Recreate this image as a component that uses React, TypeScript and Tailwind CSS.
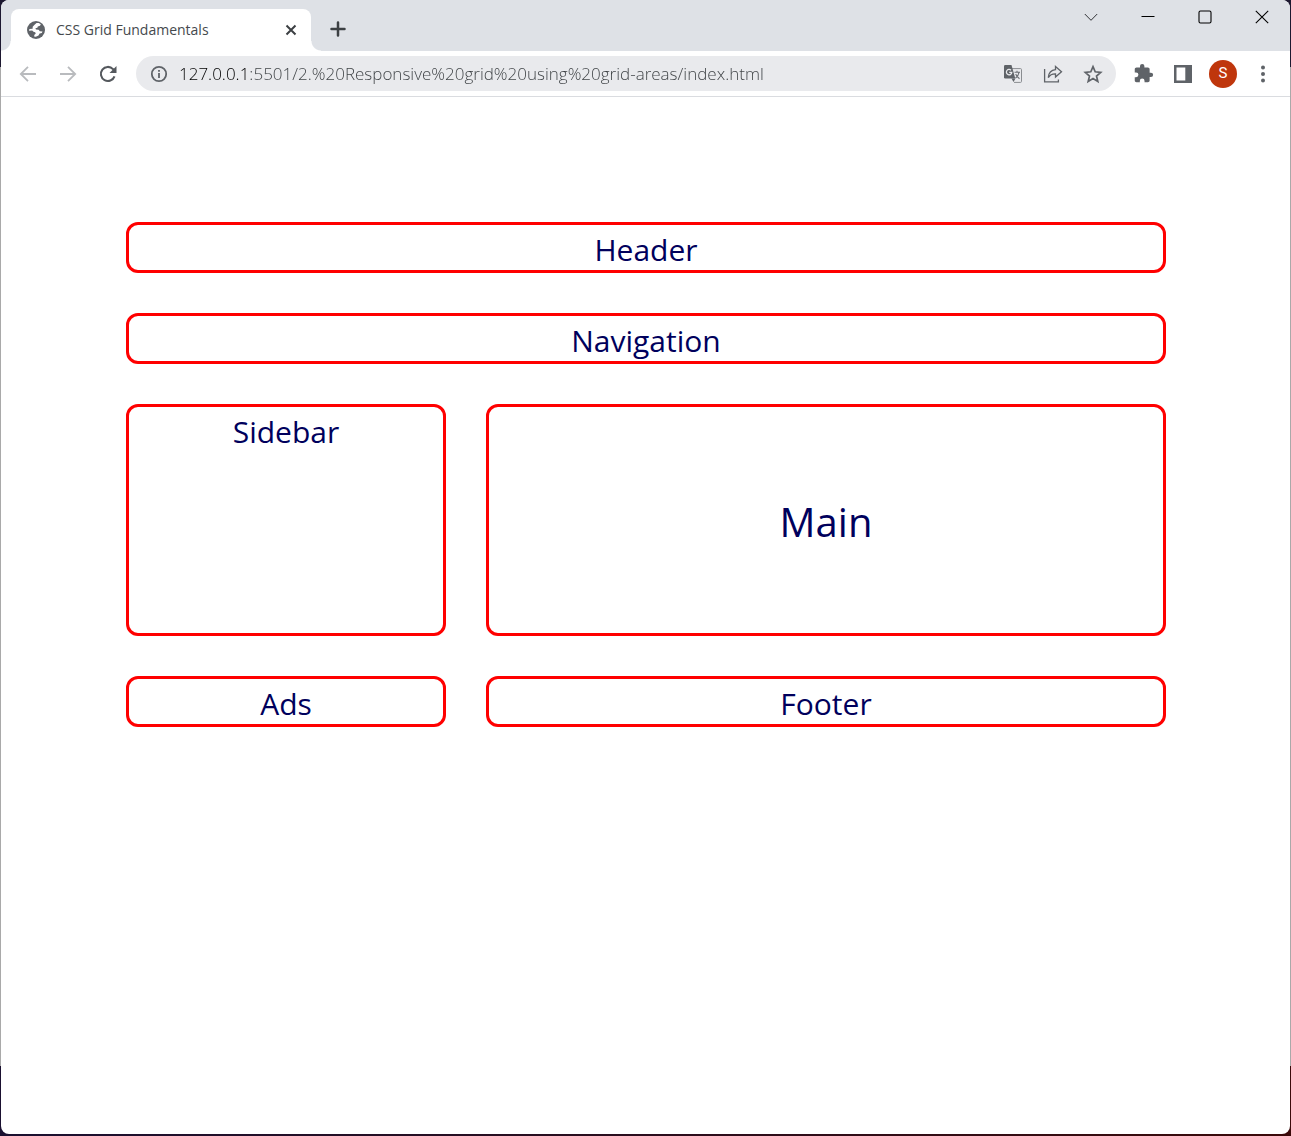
import { useState } from "react";
import type { ReactNode } from "react";

const PAGE_URL = "127.0.0.1:5501/2.%20Responsive%20grid%20using%20grid-areas/index.html";

function IconButton({ label, className = "", children }: { label: string; className?: string; children: ReactNode }) {
  return (
    <button type="button" aria-label={label} className={`flex shrink-0 items-center justify-center ${className}`}>
      {children}
    </button>
  );
}

function TabStrip() {
  return (
    <div className="flex h-[51px] items-end justify-between bg-[#dee1e6]">
      <div className="flex min-w-0 items-end">
        <div className="h-[10px] w-[10px] bg-[radial-gradient(circle_at_0_0,#dee1e6_9px,#ffffff_10px)]" />
        <div className="flex h-[42px] w-[300px] items-center rounded-t-lg bg-white pr-3 pl-4">
          <svg className="h-[18px] w-[18px] shrink-0" viewBox="0 0 18 18" aria-hidden="true">
            <circle cx="9" cy="9" r="9" fill="#5f6368" />
            <path
              d="M9.500 2h2.300l2 1.200-.8 1.600-2.200.6-.4 1.300-2 .5.600 1.300 2.600.2 1.200 1.500 2.700.2-.7 1.600-2.200.6-1.100 1.800-2.700 1.400-1.700-.4.300-1.700 1.300-.9-.5-1.500-1.700-.6-1.300-1.300-3.200.3.400-1.700 3.200-.2.100-2 1.600-1.700z"
              fill="#ffffff"
            />
          </svg>
          <span className="ml-[11px] grow truncate text-[14px] leading-5 text-[#45494d]">CSS Grid Fundamentals</span>
          <IconButton label="Close tab" className="h-4 w-4">
            <svg className="h-4 w-4" viewBox="0 0 16 16" fill="none" stroke="#3c4043" strokeWidth="2">
              <path d="M3.500 3.500l9 9M12.500 3.500l-9 9" />
            </svg>
          </IconButton>
        </div>
        <div className="h-[10px] w-[10px] bg-[radial-gradient(circle_at_100%_0,#dee1e6_9px,#ffffff_10px)]" />
        <IconButton label="New tab" className="mb-2 h-7 w-[34px]">
          <svg className="h-4 w-4" viewBox="0 0 16 16" fill="none" stroke="#3c4043" strokeWidth="2.500" strokeLinecap="round">
            <path d="M8 1.500v13M1.500 8h13" />
          </svg>
        </IconButton>
      </div>
      <div className="flex self-start">
        <IconButton label="Search tabs" className="h-[34px] w-[57px]">
          <svg className="h-[14px] w-[14px]" viewBox="0 0 14 14" fill="none" stroke="#303236">
            <path d="M.8 4L7 10.300 13.200 4" />
          </svg>
        </IconButton>
        <IconButton label="Minimize" className="h-[34px] w-[57px]">
          <svg className="h-[14px] w-[14px]" viewBox="0 0 14 14" fill="none" stroke="#000000">
            <path d="M.5 6.500h13" />
          </svg>
        </IconButton>
        <IconButton label="Maximize" className="h-[34px] w-[57px]">
          <svg className="h-[14px] w-[14px]" viewBox="0 0 14 14" fill="none" stroke="#000000" strokeWidth="1.100">
            <rect x="1" y="1" width="12" height="12" rx="1.500" />
          </svg>
        </IconButton>
        <IconButton label="Close window" className="h-[34px] w-[57px]">
          <svg className="h-[14px] w-[14px]" viewBox="0 0 14 14" fill="none" stroke="#000000" strokeWidth="1.100">
            <path d="M.8.8l12.400 12.400M13.200.8L.8 13.200" />
          </svg>
        </IconButton>
      </div>
    </div>
  );
}

function AddressBar() {
  const [url, setUrl] = useState(PAGE_URL);
  return (
    <div className="flex h-[35px] min-w-0 grow items-center rounded-full bg-[#e9eaed] pl-[14px]">
      <IconButton label="Site information" className="h-[18px] w-[18px]">
        <svg className="h-[18px] w-[18px]" viewBox="0 0 18 18" fill="none" stroke="#5f6368" strokeWidth="1.800">
          <circle cx="9" cy="9" r="7.200" />
          <path d="M9 8v5M9 5v1.800" />
        </svg>
      </IconButton>
      <input
        type="text"
        aria-label="Address"
        value={url}
        onChange={(event) => setUrl(event.target.value)}
        className="ml-[11px] h-8 min-w-0 grow bg-[linear-gradient(to_right,#000000_67px,#3c4043_67px)] bg-clip-text text-[17px] font-light text-transparent caret-black outline-none"
      />
      <IconButton label="Translate this page" className="h-8 w-10">
        <svg className="h-5 w-5" viewBox="0 0 20 20" fill="none">
          <path d="M8.500 4.600h9q1 0 1 1v11.800q0 1-1 1H11" stroke="#8a8d91" strokeWidth="1" />
          <path d="M2.200 1h6.300l3.800 13.500H2.200Q1 14.500 1 13.300V2.200Q1 1 2.200 1z" fill="#5f6368" />
          <path d="M8.500 14.500h4L10.500 18z" fill="#5f6368" />
          <path d="M8 6.200A2.700 2.700 0 1 0 8.800 8.300H6.200" stroke="#e9eaed" strokeWidth="1.300" />
          <path d="M11.500 8.200h5.500M14 6.800v1.400M16 8.300c-.4 2.500-2 4.500-3.500 5.700M12.700 10c.8 1.900 2.200 3.600 3.800 4.700" stroke="#6b6f74" strokeWidth="1.100" />
        </svg>
      </IconButton>
      <IconButton label="Share this page" className="h-8 w-10">
        <svg className="h-5 w-5" viewBox="0 0 20 20" fill="none" stroke="#5f6368" strokeWidth="1.300">
          <path d="M1.600 5v12.800h13.800v-2.300" />
          <path d="M12.500 2.500l6 5.200-6 5.300v-3.100c-3.400-.1-5.700 1.200-7.200 3.700.3-4.200 2.700-7.400 7.200-7.900z" strokeLinejoin="miter" />
        </svg>
      </IconButton>
      <IconButton label="Bookmark this tab" className="mr-[3px] h-8 w-10">
        <svg className="h-5 w-5" viewBox="0 0 20 20" fill="none" stroke="#5f6368" strokeWidth="1.700">
          <path d="M10 2.700l2.200 5.100 5.500.5-4.200 3.700 1.300 5.400-4.800-2.900-4.800 2.900 1.300-5.400-4.200-3.700 5.500-.5z" />
        </svg>
      </IconButton>
    </div>
  );
}

function Toolbar() {
  return (
    <div className="flex h-[46px] items-center border-b border-[#dadce0] bg-white pl-[7px]">
      <IconButton label="Back" className="h-8 w-10">
        <svg className="h-[18px] w-[18px]" viewBox="0 0 18 18" fill="none" stroke="#b9bbbe" strokeWidth="1.800">
          <path d="M17 9H2M9 1.800L1.800 9 9 16.200" />
        </svg>
      </IconButton>
      <IconButton label="Forward" className="h-8 w-10">
        <svg className="h-[18px] w-[18px]" viewBox="0 0 18 18" fill="none" stroke="#b9bbbe" strokeWidth="1.800">
          <path d="M1 9h15M9 1.800L16.200 9 9 16.200" />
        </svg>
      </IconButton>
      <IconButton label="Reload" className="h-8 w-10">
        <svg className="h-[18px] w-[18px]" viewBox="0 0 18 18" fill="none">
          <path d="M15.500 11.300A7 7 0 1 1 14 4.100L15.300 5.400" stroke="#55595e" strokeWidth="2.100" />
          <path d="M17.500 1v7h-7z" fill="#55595e" />
        </svg>
      </IconButton>
      <div className="ml-2 flex min-w-0 grow">
        <AddressBar />
      </div>
      <div className="flex shrink-0 items-center px-[7px]">
        <IconButton label="Extensions" className="h-8 w-10">
          <svg className="h-[21px] w-[21px]" viewBox="0 0 24 24" fill="#5f6368">
            <path d="M20.500 11H19V7c0-1.100-.9-2-2-2h-4V3.500a2.500 2.500 0 0 0-5 0V5H4c-1.100 0-2 .9-2 2v3.800h1.500a2.700 2.700 0 0 1 0 5.400H2V20c0 1.100.9 2 2 2h3.800v-1.500a2.700 2.700 0 0 1 5.400 0V22H17c1.100 0 2-.9 2-2v-4h1.500a2.500 2.500 0 0 0 0-5z" />
          </svg>
        </IconButton>
        <IconButton label="Side panel" className="h-8 w-10">
          <svg className="h-[18px] w-[18px]" viewBox="0 0 18 18">
            <path fillRule="evenodd" d="M0 0h18v18H0zM2.500 2.500v13h8.800v-13z" fill="#5f6368" />
          </svg>
        </IconButton>
        <button type="button" aria-label="Profile" className="mx-[6px] flex h-7 w-7 items-center justify-center rounded-full bg-[#bf360c] font-[Roboto,sans-serif] text-[15px] text-white">
          S
        </button>
        <IconButton label="Browser menu" className="h-8 w-10">
          <svg className="h-[18px] w-[18px]" viewBox="0 0 18 18" fill="#5f6368">
            <circle cx="9" cy="2.500" r="2" />
            <circle cx="9" cy="9" r="2" />
            <circle cx="9" cy="15.500" r="2" />
          </svg>
        </IconButton>
      </div>
    </div>
  );
}

const boxStyle = "rounded-xl border-[3px] border-[#ff0000] pt-1 text-center text-[30px] leading-[41px]";

function GridPage() {
  return (
    <div className="grid grid-cols-3 gap-10 py-[125px] pr-[124px] pl-[125px] text-[#00005c]">
      <header className={`col-span-3 ${boxStyle}`}>Header</header>
      <nav className={`col-span-3 ${boxStyle}`}>Navigation</nav>
      <aside className={boxStyle}>Sidebar</aside>
      <main className="col-span-2 rounded-xl border-[3px] border-[#ff0000] pt-[85px] pb-[81px] text-center text-[40px] leading-[60px]">
        Main
      </main>
      <section className={boxStyle}>Ads</section>
      <footer className={`col-span-2 ${boxStyle}`}>Footer</footer>
    </div>
  );
}

export default function App() {
  return (
    <div className="flex min-h-screen flex-col bg-[linear-gradient(to_bottom,#1d1830_67px,#a9a9a9_67px,#a9a9a9_calc(100%-70px),transparent_calc(100%-70px)),linear-gradient(to_right,#1a1030,#3b0a0a)] px-px pb-[2px] font-['Open_Sans',sans-serif]">
      <div className="flex grow flex-col overflow-hidden rounded-lg bg-white">
        <TabStrip />
        <Toolbar />
        <GridPage />
      </div>
    </div>
  );
}
